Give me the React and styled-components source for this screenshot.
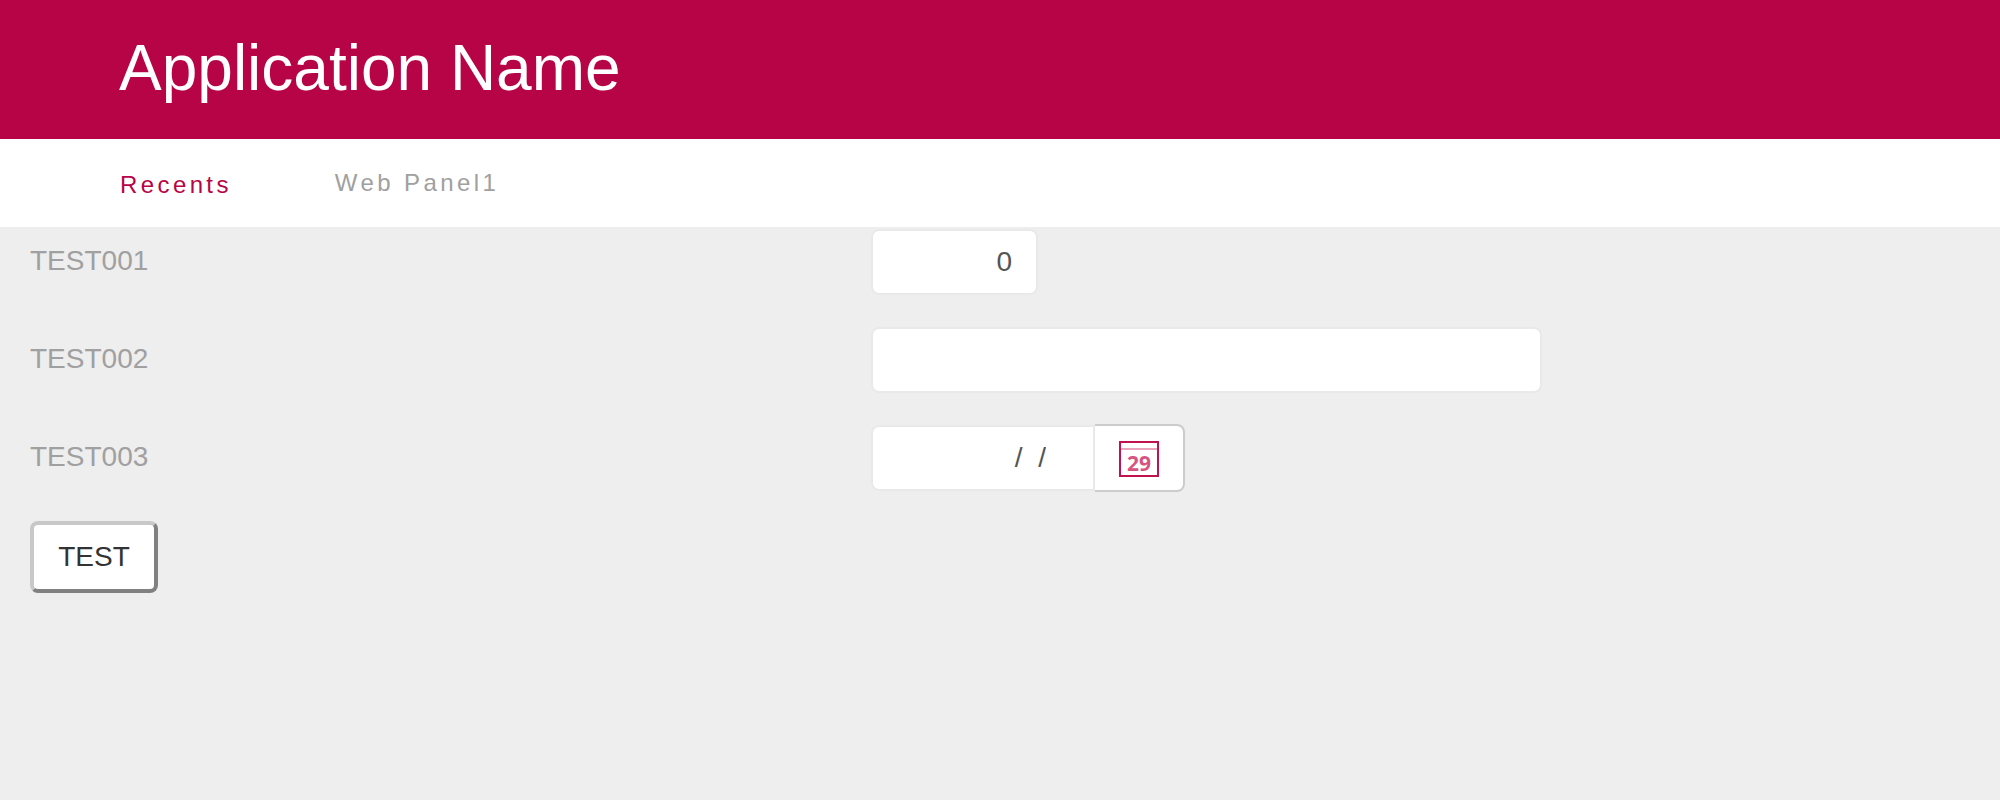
import React from 'react';
import styled, { createGlobalStyle } from 'styled-components';

const GlobalStyle = createGlobalStyle`
  html, body {
    margin: 0;
    padding: 0;
    background: #eeeeee;
    font-family: "Liberation Sans", Arial, sans-serif;
  }
`;

function CalendarIcon() {
  return (
    <svg width="40" height="36" viewBox="0 0 40 36">
      <rect x="1" y="1" width="38" height="34" fill="#fff" stroke="#c0124f" strokeWidth="2" />
      <line x1="2" y1="8" x2="38" y2="8" stroke="#e9a3bc" strokeWidth="2" />
      <text x="20" y="29.5" textAnchor="middle" fontFamily="Noto Sans, sans-serif" fontWeight="700" fontSize="21" fill="#d6557f">29</text>
    </svg>
  );
}

export default function App() {
  return (
    <Page>
      <GlobalStyle />
      <Header>
        <Title>Application Name</Title>
      </Header>
      <Nav>
        <NavItem $active>Recents</NavItem>
        <NavItem>Web Panel1</NavItem>
      </Nav>
      <Form>
        <Row>
          <Label>TEST001</Label>
          <NumberInput defaultValue="0" />
        </Row>
        <Row>
          <Label>TEST002</Label>
          <TextInput />
        </Row>
        <Row>
          <Label>TEST003</Label>
          <DateGroup>
            <DateInput defaultValue="  /  /" />
            <DateButton>
              <CalendarIcon />
            </DateButton>
          </DateGroup>
        </Row>
        <TestButton>TEST</TestButton>
      </Form>
    </Page>
  );
}

const Page = styled.div`
  min-height: 800px;
  background: #eeeeee;
`;

const Header = styled.header`
  box-sizing: border-box;
  height: 139px;
  background: #b70446;
  padding: 0 0 4px 119px;
  display: flex;
  align-items: center;
`;

const Title = styled.h1`
  margin: 0;
  font-size: 64px;
  font-weight: 400;
  color: #fff;
`;

const Nav = styled.nav`
  height: 88px;
  background: #fff;
  padding-left: 120px;
  display: flex;
  align-items: center;
  gap: 103px;
`;

const NavItem = styled.a`
  font-size: 24px;
  letter-spacing: 3.4px;
  padding-top: ${(p) => (p.$active ? '4px' : '0')};
  color: ${(p) => (p.$active ? '#b70446' : '#a0a0a0')};
`;

const Form = styled.main`
  padding: 2px 30px 0;
`;

const Row = styled.div`
  display: flex;
  align-items: center;
  height: 66px;
  margin-bottom: 32px;
`;

const Label = styled.label`
  width: 841px;
  padding-bottom: 2px;
  font-size: 28px;
  color: #a0a0a0;
`;

const inputBase = `
  box-sizing: border-box;
  height: 66px;
  border: 2px solid #e9e9e9;
  border-radius: 8px;
  background: #fff;
  font-family: "Liberation Sans", Arial, sans-serif;
  font-size: 28px;
  color: #555;
  outline: none;
`;

const NumberInput = styled.input`
  ${inputBase}
  width: 167px;
  padding: 0 24px;
  text-align: right;
`;

const TextInput = styled.input`
  ${inputBase}
  width: 671px;
  padding: 0 24px;
`;

const DateGroup = styled.div`
  display: flex;
  align-items: center;
`;

const DateInput = styled.input`
  ${inputBase}
  width: 224px;
  padding: 0 47px 0 0;
  text-align: right;
  border-radius: 8px 0 0 8px;
  white-space: pre;
`;

const DateButton = styled.button`
  box-sizing: border-box;
  width: 90px;
  height: 68px;
  padding: 2px 0 0;
  display: flex;
  align-items: center;
  justify-content: center;
  background: #fff;
  border: 2px solid #cccccc;
  border-left: 0;
  border-radius: 0 8px 8px 0;
`;

const TestButton = styled.button`
  box-sizing: border-box;
  width: 128px;
  height: 72px;
  margin-top: -2px;
  background: #fff;
  border: 4px solid;
  border-color: #c8c8c8 #808080 #808080 #c8c8c8;
  border-radius: 8px;
  font-family: "Liberation Sans", Arial, sans-serif;
  font-size: 28px;
  color: #333;
`;
